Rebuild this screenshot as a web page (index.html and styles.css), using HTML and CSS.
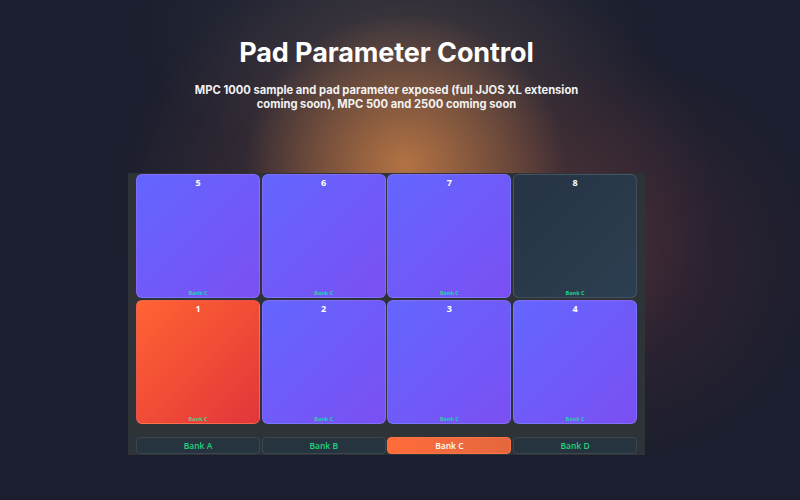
FILE: index.html
```html
<!DOCTYPE html>
<html>
<head>
<meta charset="utf-8">
<link rel="stylesheet" href="styles.css">
</head>
<body>
<div class="page">
  <header class="hero">
    <h1 class="title">Pad Parameter Control</h1>
    <p class="subtitle">MPC 1000 sample and pad parameter exposed (full JJOS XL extension<br>coming soon), MPC 500 and 2500 coming soon</p>
  </header>
  <section class="panel">
    <div class="grid">
      <div class="pad pad-purple"><span class="num">5</span><span class="bank">Bank C</span></div>
      <div class="pad pad-purple"><span class="num">6</span><span class="bank">Bank C</span></div>
      <div class="pad pad-purple"><span class="num">7</span><span class="bank">Bank C</span></div>
      <div class="pad pad-dark"><span class="num">8</span><span class="bank">Bank C</span></div>
      <div class="pad pad-red"><span class="num">1</span><span class="bank">Bank C</span></div>
      <div class="pad pad-purple"><span class="num">2</span><span class="bank">Bank C</span></div>
      <div class="pad pad-purple"><span class="num">3</span><span class="bank">Bank C</span></div>
      <div class="pad pad-purple"><span class="num">4</span><span class="bank">Bank C</span></div>
    </div>
    <div class="banks">
      <button class="bank-btn">Bank A</button>
      <button class="bank-btn">Bank B</button>
      <button class="bank-btn active">Bank C</button>
      <button class="bank-btn">Bank D</button>
    </div>
  </section>
</div>
</body>
</html>
```

FILE: styles.css
```css
html, body {
  margin: 0;
  padding: 0;
  width: 800px;
  height: 500px;
  overflow: hidden;
}
body {
  background-color: #1b1e2e;
  background-image:
    radial-gradient(ellipse 160px 150px at 405px 165px, rgba(205, 130, 70, 0.8), rgba(205, 130, 70, 0) 100%),
    radial-gradient(ellipse 300px 250px at 415px 200px, rgba(150, 90, 70, 0.45), rgba(150, 90, 70, 0) 100%),
    radial-gradient(ellipse 200px 200px at 620px 260px, rgba(110, 50, 60, 0.35), rgba(110, 50, 60, 0) 100%),
    radial-gradient(ellipse 260px 140px at 390px 30px, rgba(90, 90, 90, 0.3), rgba(90, 90, 90, 0) 100%);
  font-family: Inter, "Liberation Sans", sans-serif;
  color: #fff;
}
.page {
  width: 773px;
  display: flex;
  flex-direction: column;
  align-items: center;
}
.hero {
  text-align: center;
  padding-top: 36px;
}
.title {
  margin: 0;
  font-size: 27px;
  font-weight: 700;
  line-height: 34px;
  letter-spacing: -0.1px;
}
.subtitle {
  margin: 14px 0 0;
  font-size: 11.2px;
  font-weight: 700;
  line-height: 13.5px;
  color: #f2f2f2;
}
.panel {
  margin-top: 62px;
  width: 517px;
  box-sizing: border-box;
  background: #2d3337;
  padding: 1px 8px 1px 8px;
}
.grid {
  display: grid;
  grid-template-columns: repeat(4, 124px);
  grid-auto-rows: 124px;
  gap: 2px 1.7px;
}
.pad {
  position: relative;
  border-radius: 6px;
  border: 1px solid rgba(255, 255, 255, 0.12);
  box-sizing: border-box;
  display: flex;
  flex-direction: column;
  align-items: center;
  justify-content: space-between;
  padding: 2px 0 0;
  font-family: "Open Sans", "DejaVu Sans", sans-serif;
}
.pad-purple {
  background: linear-gradient(135deg, #6366ff 0%, #7b4ff2 100%);
}
.pad-red {
  background: linear-gradient(135deg, #ff6432 0%, #e3353b 100%);
}
.pad-dark {
  background: linear-gradient(135deg, #263444 0%, #2c3f50 100%);
}
.num {
  font-size: 9px;
  font-weight: 700;
  line-height: 12px;
  color: #fff;
}
.bank {
  font-size: 5.5px;
  font-weight: 700;
  line-height: 8px;
  color: #22d3b0;
}
.pad-dark .bank {
  color: #1fd68a;
}
.pad-red .bank {
  color: #5fc98a;
}
.banks {
  display: grid;
  grid-template-columns: repeat(4, 124px);
  gap: 1.7px;
  margin-top: 13px;
}
.bank-btn {
  height: 17px;
  border-radius: 4px;
  border: 1px solid #3b464e;
  background: #263440;
  color: #22d37d;
  font-family: "Open Sans", "DejaVu Sans", sans-serif;
  font-size: 8.5px;
  font-weight: 600;
  padding: 0;
  line-height: 15px;
}
.bank-btn.active {
  background: linear-gradient(90deg, #ff6c3a 0%, #e4673f 100%);
  border-color: #ff7446;
  color: #fff;
}
```
